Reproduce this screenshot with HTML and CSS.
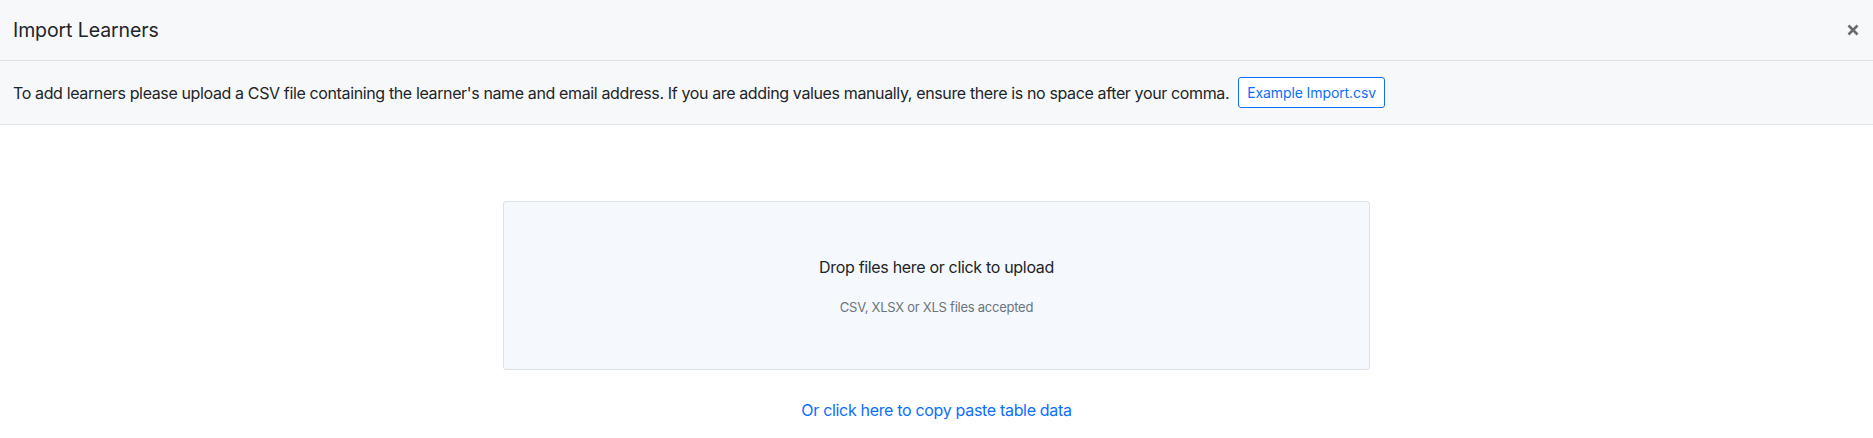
FILE: index.html
```html
<!DOCTYPE html>
<html lang="en">
<head>
<meta charset="utf-8">
<title>Import Learners</title>
<link rel="stylesheet" href="styles.css">
</head>
<body>
<div class="modal">
  <header class="modal-header">
    <h5 class="modal-title">Import Learners</h5>
    <button class="close" aria-label="Close">
      <svg width="12" height="12" viewBox="0 0 12 12"><path d="M1.5 1.5 L10.5 10.5 M10.5 1.5 L1.5 10.5" stroke="#6b6b6b" stroke-width="2.6" stroke-linecap="butt"/></svg>
    </button>
  </header>
  <div class="info-bar">
    <span class="info-text">To add learners please upload a CSV file containing the learner's name and email address. If you are adding values manually, ensure there is no space after your comma.</span>
    <a class="btn-outline" href="#">Example Import.csv</a>
  </div>
  <main class="modal-body">
    <div class="dropzone">
      <div class="dz-title">Drop files here or click to upload</div>
      <div class="dz-sub">CSV, XLSX or XLS files accepted</div>
    </div>
    <a class="paste-link" href="#">Or click here to copy paste table data</a>
  </main>
</div>
</body>
</html>
```
FILE: styles.css
```css
* { box-sizing: border-box; }
html, body { margin: 0; padding: 0; background: #fff; }
body {
  font-family: Inter, "Noto Sans", "Liberation Sans", sans-serif;
  color: #212529;
}
.modal { width: 100%; }
.modal-header {
  height: 61px;
  background: #f7f8fa;
  border-bottom: 1px solid #dee2e6;
  display: flex;
  align-items: center;
  justify-content: space-between;
  padding: 0 14px 0 13px;
}
.modal-title {
  margin: 0;
  font-size: 19.5px;
  font-weight: 400;
  letter-spacing: -0.1px;
  color: #212529;
}
.close {
  border: 0;
  background: none;
  padding: 0;
  display: flex;
  cursor: pointer;
}
.info-bar {
  height: 64px;
  background: #f7f8fa;
  border-bottom: 1px solid #dee2e6;
  display: flex;
  align-items: center;
  padding: 0 13px;
  gap: 9px;
}
.info-text { font-size: 16px; letter-spacing: -0.37px; }
.btn-outline {
  display: inline-flex;
  align-items: center;
  height: 31px;
  padding: 0 8px;
  border: 1px solid #0d6efd;
  border-radius: 3px;
  color: #0d6efd;
  font-size: 14px;
  letter-spacing: -0.1px;
  text-decoration: none;
  background: #fff;
}
.modal-body {
  display: flex;
  flex-direction: column;
  align-items: center;
  padding-top: 76px;
}
.dropzone {
  width: 867px;
  height: 169px;
  background: #f5f8fc;
  border: 1px solid #dee2e6;
  border-radius: 3px;
  display: flex;
  flex-direction: column;
  align-items: center;
  justify-content: center;
}
.dz-title { font-size: 16px; letter-spacing: -0.32px; }
.dz-sub { font-size: 13px; letter-spacing: -0.25px; color: #6c757d; margin-top: 22px; }
.paste-link {
  margin-top: 30px;
  font-size: 16px;
  letter-spacing: -0.32px;
  color: #0d6efd;
  text-decoration: none;
}
```
